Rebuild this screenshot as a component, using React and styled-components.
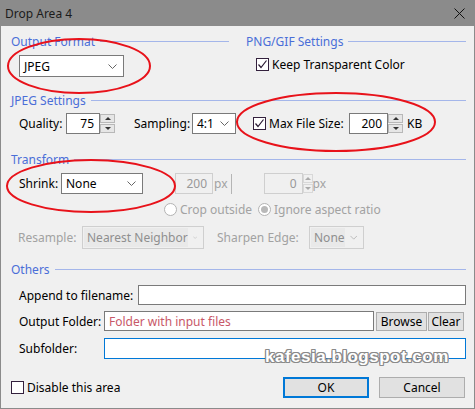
import React from 'react'
import styled, { createGlobalStyle } from 'styled-components'

const GlobalStyle = createGlobalStyle`
  html, body {
    margin: 0;
    padding: 0;
    background: #f0f0f0;
  }
  body {
    font-family: "Noto Sans", "Open Sans", sans-serif;
    font-size: 12px;
    color: #000;
  }
`

const Window = styled.div`
  position: relative;
  width: 475px;
  height: 409px;
  display: flex;
  flex-direction: column;
  overflow: hidden;
`
const TitleBar = styled.div`
  flex: none;
  height: 26px;
  background: #8b8b8b;
  display: flex;
  align-items: center;
  padding: 0 10px 0 5px;
  color: #1b1b1b;
`
const Title = styled.span`
  flex: 1;
`
const Body = styled.div`
  flex: 1;
  background: #f0f0f0;
  border: 1px solid #8b8b8b;
  border-top: none;
  padding: 8px 8px 0 10px;
  display: flex;
  flex-direction: column;
`
const Header = styled.div`
  display: flex;
  align-items: center;
  height: 15px;
  margin-top: ${({ $mt }) => $mt || 0}px;
`
const Legend = styled.span`
  color: #4a6ed8;
  white-space: nowrap;
`
const Rule = styled.div`
  flex: 1;
  height: 1px;
  background: #a4b6ea;
  margin-left: 5px;
`
const TopGrid = styled.div`
  display: grid;
  grid-template-columns: 218px 220px;
  column-gap: 17px;
`
const Column = styled.div`
  display: flex;
  flex-direction: column;
`
const Row = styled.div`
  display: flex;
  align-items: center;
  flex: none;
  height: ${({ $h }) => $h}px;
  margin-top: ${({ $mt }) => $mt || 0}px;
  padding-left: ${({ $pl }) => $pl || 0}px;
  padding-right: ${({ $pr }) => $pr || 0}px;
`
const Label = styled.span`
  flex: none;
  width: ${({ $w }) => ($w ? `${$w}px` : 'auto')};
  margin-left: ${({ $ml }) => $ml || 0}px;
  color: ${({ $disabled }) => ($disabled ? '#a2a2a2' : '#000')};
  white-space: nowrap;
`
const Field = styled.div`
  box-sizing: border-box;
  flex: ${({ $w }) => ($w ? 'none' : 1)};
  width: ${({ $w }) => ($w ? `${$w}px` : 'auto')};
  height: ${({ $h }) => $h || 21}px;
  margin-left: ${({ $ml }) => $ml || 0}px;
  border: 1px solid
    ${({ $focus, $disabled }) => ($focus ? '#0078d7' : $disabled ? '#cfcfcf' : '#7a7a7a')};
  background: ${({ $disabled }) => ($disabled ? '#f0f0f0' : '#fff')};
  color: ${({ $disabled, $hint }) => ($disabled ? '#999' : $hint ? '#c85868' : '#000')};
  display: flex;
  align-items: center;
  justify-content: ${({ $right }) => ($right ? 'flex-end' : 'flex-start')};
  padding: 0 ${({ $right }) => ($right ? 5 : 4)}px 0 4px;
  white-space: nowrap;
  overflow: hidden;
`
const SelectBox = styled(Field)`
  justify-content: space-between;
  padding: ${({ $disabled }) => ($disabled ? '1px 6px 1px 1px' : '0 6px 0 4px')};
`
const SelectText = styled.span`
  flex: 1;
  align-self: stretch;
  display: flex;
  align-items: center;
  padding-left: ${({ $disabled }) => ($disabled ? 3 : 0)}px;
  background: ${({ $disabled }) => ($disabled ? '#e9e9e9' : 'transparent')};
  color: ${({ $disabled }) => ($disabled ? '#8f8f8f' : '#000')};
  margin-right: 5px;
`
const Spinner = styled.div`
  box-sizing: border-box;
  flex: none;
  width: ${({ $w }) => $w || 15}px;
  height: 21px;
  display: flex;
  flex-direction: column;
  gap: 1px;
  padding: 1px 0;
  overflow: hidden;
`
const SpinHalf = styled.div`
  flex: 1;
  background: ${({ $disabled }) => ($disabled ? '#f0f0f0' : '#e6e6e6')};
  border: 1px solid ${({ $disabled }) => ($disabled ? '#d8d8d8' : '#b8b8b8')};
  display: flex;
  align-items: center;
  justify-content: center;
`
const Tri = styled.span`
  width: 0;
  height: 0;
  border-left: 3px solid transparent;
  border-right: 3px solid transparent;
  ${({ $down, $disabled }) =>
    $down
      ? `border-top: 3px solid ${$disabled ? '#aaa' : '#333'};`
      : `border-bottom: 3px solid ${$disabled ? '#aaa' : '#333'};`}
`
const Divider = styled.div`
  width: 1px;
  height: 20px;
  margin-left: ${({ $ml }) => $ml || 0}px;
  background: #b5b5b5;
`
const CheckBox = styled.span`
  box-sizing: border-box;
  flex: none;
  width: 13px;
  height: 13px;
  margin-left: ${({ $ml }) => $ml || 0}px;
  border: 1px solid #33203d;
  background: #fff;
  display: flex;
  align-items: center;
  justify-content: center;
`
const RadioCircle = styled.span`
  box-sizing: border-box;
  flex: none;
  width: 13px;
  height: 13px;
  margin-left: ${({ $ml }) => $ml || 0}px;
  border-radius: 50%;
  border: 1px solid #b3b3b3;
  background: #fff;
  display: flex;
  align-items: center;
  justify-content: center;
  &::after {
    content: '';
    width: 7px;
    height: 7px;
    border-radius: 50%;
    background: ${({ $on }) => ($on ? '#b9b9b9' : 'transparent')};
  }
`
const Button = styled.div`
  box-sizing: border-box;
  flex: none;
  width: ${({ $w }) => $w}px;
  height: ${({ $h }) => $h || 21}px;
  margin-left: ${({ $ml }) => $ml || 0}px;
  background: #e1e1e1;
  border: ${({ $primary }) => ($primary ? '2px solid #0078d7' : '1px solid #adadad')};
  display: flex;
  align-items: center;
  justify-content: center;
`
const Spacer = styled.div`
  flex: 1;
`
const Watermark = styled.div`
  position: absolute;
  left: 265px;
  top: 347px;
  font-family: "Liberation Sans", Arial, sans-serif;
  font-weight: bold;
  font-size: 17px;
  letter-spacing: 0.5px;
  color: #fff;
  text-shadow: 1px 0 #8a8a8a, -1px 0 #8a8a8a, 0 1px #8a8a8a, 0 -1px #8a8a8a,
    1px 1px #8a8a8a, -1px -1px #8a8a8a, 1px -1px #8a8a8a, -1px 1px #8a8a8a;
  pointer-events: none;
`
const Marks = styled.svg`
  position: absolute;
  left: 0;
  top: 0;
  pointer-events: none;
`

const Check = ({ on, ml }) => (
  <CheckBox $ml={ml}>
    {on && (
      <svg width="11" height="11" viewBox="0 0 11 11">
        <polyline points="1.5,5.5 4,8.5 9.5,1.5" fill="none" stroke="#2a1a33" strokeWidth="1.2" />
      </svg>
    )}
  </CheckBox>
)

const Chevron = ({ disabled }) => (
  <svg width="9" height="5" viewBox="0 0 9 5">
    <polyline points="0.5,0.5 4.5,4.5 8.5,0.5" fill="none" stroke={disabled ? '#b0b0b0' : '#666'} strokeWidth="1" />
  </svg>
)

const Select = ({ w, h, ml, disabled, children }) => (
  <SelectBox $w={w} $h={h} $ml={ml} $disabled={disabled}>
    <SelectText $disabled={disabled}>{children}</SelectText>
    <Chevron disabled={disabled} />
  </SelectBox>
)

const Spin = ({ w, disabled }) => (
  <Spinner $w={w}>
    <SpinHalf $disabled={disabled}><Tri $disabled={disabled} /></SpinHalf>
    <SpinHalf $disabled={disabled}><Tri $down $disabled={disabled} /></SpinHalf>
  </Spinner>
)

export default function App() {
  return (
    <Window>
      <GlobalStyle />
      <TitleBar>
        <Title>Drop Area 4</Title>
        <svg width="11" height="11" viewBox="0 0 11 11">
          <path d="M0.5 0.5 L10.5 10.5 M10.5 0.5 L0.5 10.5" stroke="#111" strokeWidth="1" />
        </svg>
      </TitleBar>
      <Body>
        <TopGrid>
          <Column>
            <Header>
              <Legend>Output Format</Legend>
              <Rule />
            </Header>
            <Row $h={22} $mt={6} $pl={8}>
              <Select w={105} h={22}>JPEG</Select>
            </Row>
          </Column>
          <Column>
            <Header>
              <Legend>PNG/GIF Settings</Legend>
              <Rule />
            </Header>
            <Row $h={13} $mt={9} $pl={10}>
              <Check on />
              <Label $ml={3}>Keep Transparent Color</Label>
            </Row>
          </Column>
        </TopGrid>

        <Header $mt={16}>
          <Legend>JPEG Settings</Legend>
          <Rule />
        </Header>
        <Row $h={21} $mt={5} $pl={8}>
          <Label $w={47}>Quality:</Label>
          <Field $w={34} $right>75</Field>
          <Spin />
          <Label $ml={19} $w={58}>Sampling:</Label>
          <Select w={44}>4:1</Select>
          <Check on ml={17} />
          <Label $ml={3} $w={80}>Max File Size:</Label>
          <Field $w={39} $right>200</Field>
          <Spin />
          <Label $ml={4}>KB</Label>
        </Row>

        <Header $mt={18}>
          <Legend>Transform</Legend>
          <Rule />
        </Header>
        <Row $h={21} $mt={6} $pl={8}>
          <Label $w={42}>Shrink:</Label>
          <Select w={82}>None</Select>
          <Field $w={38} $ml={32} $right $disabled>200</Field>
          <Label $ml={1} $disabled>px</Label>
          <Divider $ml={3} />
          <Field $w={39} $ml={32} $right $disabled>0</Field>
          <Spin w={10} disabled />
          <Label $disabled>px</Label>
        </Row>
        <Row $h={14} $mt={8}>
          <RadioCircle $ml={153} />
          <Label $ml={3} $w={78} $disabled>Crop outside</Label>
          <RadioCircle $on />
          <Label $ml={3} $disabled>Ignore aspect ratio</Label>
        </Row>
        <Row $h={23} $mt={10} $pl={7}>
          <Label $w={64} $disabled>Resample:</Label>
          <Select w={122} h={23} disabled>Nearest Neighbor</Select>
          <Label $ml={13} $w={92} $disabled>Sharpen Edge:</Label>
          <Select w={55} h={23} disabled>None</Select>
        </Row>

        <Header $mt={13}>
          <Legend>Others</Legend>
          <Rule />
        </Header>
        <Row $h={20} $mt={8} $pl={8}>
          <Label $w={119}>Append to filename:</Label>
          <Field $h={20} />
        </Row>
        <Row $h={20} $mt={6} $pl={8} $pr={2}>
          <Label $w={85}>Output Folder:</Label>
          <Field $h={20} $hint>Folder with input files</Field>
          <Button $w={51} $h={19} $ml={2}>Browse</Button>
          <Button $w={36} $h={19} $ml={1}>Clear</Button>
        </Row>
        <Row $h={21} $mt={7} $pl={8}>
          <Label $w={85}>Subfolder:</Label>
          <Field $h={21} $focus />
        </Row>
        <Row $h={21} $mt={18} $pr={1}>
          <Check />
          <Label $ml={3}>Disable this area</Label>
          <Spacer />
          <Button $w={86} $primary>OK</Button>
          <Button $w={86} $ml={10}>Cancel</Button>
        </Row>
      </Body>

      <Watermark>kafesia.blogspot.com</Watermark>
      <Marks width="475" height="409" viewBox="0 0 475 409">
        <g fill="none" stroke="#e8121a" strokeWidth="2">
          <ellipse cx="79" cy="66" rx="71" ry="27" />
          <ellipse cx="336" cy="122" rx="99" ry="29" />
          <ellipse cx="91" cy="186" rx="84" ry="26" />
        </g>
      </Marks>
    </Window>
  )
}
